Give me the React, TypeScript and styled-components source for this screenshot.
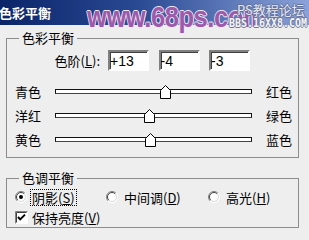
import styled, { createGlobalStyle } from "styled-components";

const GlobalStyle = createGlobalStyle`
  html, body {
    margin: 0;
    padding: 0;
    background: #eeeeee;
  }
`;

const Dialog = styled.div`
  position: relative;
  width: 309px;
  height: 240px;
  overflow: hidden;
  background: #eeeeee;
  font-family: "Noto Sans CJK SC", "Noto Sans", sans-serif;
  font-size: 13px;
  color: #000;
`;

const TitleBar = styled.div`
  height: 25px;
  background: linear-gradient(to right, #0b2468 0%, #2a4a94 45%, #8aa2d8 100%);
  color: #fff;
  font-weight: bold;
  font-size: 13px;
  line-height: 25px;
  text-indent: -1px;
`;

const Body = styled.div`
  padding: 6px 0 0 6px;
`;

const Group = styled.fieldset<{ $gap?: number; $pad: string }>`
  box-sizing: border-box;
  width: 293px;
  min-width: 0;
  margin: ${(p) => p.$gap ?? 0}px 0 0 0;
  padding: ${(p) => p.$pad};
  border: 1px solid #8c8c8c;
`;

const Legend = styled.legend`
  padding: 0 3px;
  margin-left: 4px;
  font-size: 13px;
  line-height: 14px;
`;

const Key = styled.span`
  text-decoration: underline;
`;

const LevelRow = styled.div`
  display: flex;
  align-items: center;
  height: 21px;
`;

const LevelLabel = styled.span`
  width: 85px;
  margin-right: 8px;
  text-align: right;
`;

const ValueInput = styled.input`
  box-sizing: border-box;
  width: 41px;
  height: 21px;
  margin: 0 9.5px 0 0;
  padding: 0;
  background: #fff;
  border: 2px solid;
  border-color: #808080 #ffffff #ffffff #808080;
  box-shadow: inset 1px 1px 0 #404040;
  font-family: "Liberation Sans", Arial, sans-serif;
  font-size: 14px;
  color: #000;
  outline: none;
`;

const SliderRow = styled.div<{ $first?: boolean }>`
  display: flex;
  align-items: center;
  height: 24px;
  margin-top: ${(p) => (p.$first ? 8 : 0)}px;
`;

const SideLabel = styled.span<{ $left?: boolean }>`
  width: ${(p) => (p.$left ? "40px" : "auto")};
  margin-left: ${(p) => (p.$left ? 0 : 14)}px;
`;

const Track = styled.div`
  position: relative;
  box-sizing: border-box;
  width: 197px;
  height: 5px;
  background: #fff;
  border: 1px solid #111;
  border-bottom-color: #444;
`;

const Thumb = styled.svg`
  position: absolute;
  top: -5px;
  display: block;
`;

const ToneRow = styled.div`
  display: grid;
  grid-template-columns: 91px 102px auto;
  align-items: center;
  height: 16px;
`;

const Option = styled.div`
  display: flex;
  align-items: center;
`;

const OptionText = styled.span<{ $focus?: boolean }>`
  margin-left: ${(p) => (p.$focus ? 4 : 5)}px;
  padding: 0 1px;
  line-height: 15px;
  outline: ${(p) => (p.$focus ? "1px dotted #000" : "none")};
`;

const CheckRow = styled.div`
  display: flex;
  align-items: center;
  height: 16px;
  margin-top: 4px;
`;

const CheckText = styled.span`
  margin-left: 4px;
`;

const Watermark = styled.div`
  position: absolute;
  left: 87px;
  top: 2px;
  font-family: "Liberation Sans", Arial, sans-serif;
  font-weight: bold;
  font-size: 30px;
  line-height: 30px;
  color: #9d5aab;
  letter-spacing: -0.5px;
  transform: scaleX(0.85);
  transform-origin: left top;
  text-shadow: 1px 0 0 #f3e6f4, -1px 0 0 #f3e6f4, 0 1px 0 #f3e6f4, 0 -1px 0 #f3e6f4;
  white-space: nowrap;
`;

const ForumName = styled.div`
  position: absolute;
  left: 237px;
  top: 2px;
  font-family: "Noto Sans CJK SC", "Noto Sans", sans-serif;
  font-size: 13px;
  line-height: 15px;
  color: #e6eaf4;
  text-shadow: 1px 0 0 #62709c, -1px 0 0 #62709c, 0 1px 0 #62709c, 0 -1px 0 #62709c;
  white-space: nowrap;
`;

const ForumUrl = styled.div`
  position: absolute;
  left: 229px;
  top: 18px;
  font-family: "DejaVu Sans Mono", "Liberation Mono", monospace;
  font-size: 12px;
  line-height: 11px;
  font-weight: bold;
  color: #f4f4f8;
  transform: scaleX(0.83);
  transform-origin: left top;
  text-shadow: 1px 0 0 #6e7896, -1px 0 0 #6e7896, 0 1px 0 #6e7896, 0 -1px 0 #6e7896;
  white-space: nowrap;
`;

const sliders = [
  { left: "青色", right: "红色", value: 13 },
  { left: "洋红", right: "绿色", value: -4 },
  { left: "黄色", right: "蓝色", value: -3 },
];

function Radio({ checked }: { checked?: boolean }) {
  return (
    <svg width="12" height="12" viewBox="0 0 12 12">
      <circle cx="6" cy="6" r="5.5" fill="#fff" />
      <path d="M9.9 2.1 A5.5 5.5 0 0 0 2.1 9.9" stroke="#808080" fill="none" />
      <path d="M2.1 9.9 A5.5 5.5 0 0 0 9.9 2.1" stroke="#ffffff" fill="none" />
      <path d="M9.2 2.8 A4.5 4.5 0 0 0 2.8 9.2" stroke="#404040" fill="none" />
      <path d="M2.8 9.2 A4.5 4.5 0 0 0 9.2 2.8" stroke="#d8d8d8" fill="none" />
      {checked && <circle cx="6" cy="6" r="2" fill="#000" />}
    </svg>
  );
}

function Checkbox() {
  return (
    <svg width="13" height="13" viewBox="0 0 13 13">
      <rect x="0" y="0" width="13" height="13" fill="#fff" />
      <path d="M0.5 12.5 V0.5 H12.5" stroke="#808080" fill="none" />
      <path d="M1.5 11.5 V1.5 H11.5" stroke="#404040" fill="none" />
      <polyline points="3,6 5.2,8.4 10,3.6" stroke="#000" strokeWidth="2" fill="none" />
    </svg>
  );
}

export default function App() {
  return (
    <Dialog>
      <GlobalStyle />
      <TitleBar>色彩平衡</TitleBar>
      <Body>
        <Group $pad="5px 0 6px 8px">
          <Legend>色彩平衡</Legend>
          <LevelRow>
            <LevelLabel>
              色阶(<Key>L</Key>):
            </LevelLabel>
            <ValueInput readOnly value="+13" />
            <ValueInput readOnly value="-4" />
            <ValueInput readOnly value="-3" />
          </LevelRow>
          {sliders.map((s, i) => (
            <SliderRow key={s.left} $first={i === 0}>
              <SideLabel $left>{s.left}</SideLabel>
              <Track>
                <Thumb
                  width="11"
                  height="14"
                  viewBox="0 0 11 14"
                  style={{ left: `calc(${50 + s.value / 2}% - 6px)` }}
                >
                  <polygon
                    points="5.5,0.5 10.5,5.5 10.5,13.5 0.5,13.5 0.5,5.5"
                    fill="#fff"
                    stroke="#000"
                  />
                </Thumb>
              </Track>
              <SideLabel>{s.right}</SideLabel>
            </SliderRow>
          ))}
        </Group>

        <Group $gap={13} $pad="4px 0 2px 8px">
          <Legend>色调平衡</Legend>
          <ToneRow>
            <Option>
              <Radio checked />
              <OptionText $focus>
                阴影(<Key>S</Key>)
              </OptionText>
            </Option>
            <Option>
              <Radio />
              <OptionText>
                中间调(<Key>D</Key>)
              </OptionText>
            </Option>
            <Option>
              <Radio />
              <OptionText>
                高光(<Key>H</Key>)
              </OptionText>
            </Option>
          </ToneRow>
          <CheckRow>
            <Checkbox />
            <CheckText>
              保持亮度(<Key>V</Key>)
            </CheckText>
          </CheckRow>
        </Group>
      </Body>

      <Watermark>www.68ps.com</Watermark>
      <ForumName>PS教程论坛</ForumName>
      <ForumUrl>BBS.16XX8.COM</ForumUrl>
    </Dialog>
  );
}
